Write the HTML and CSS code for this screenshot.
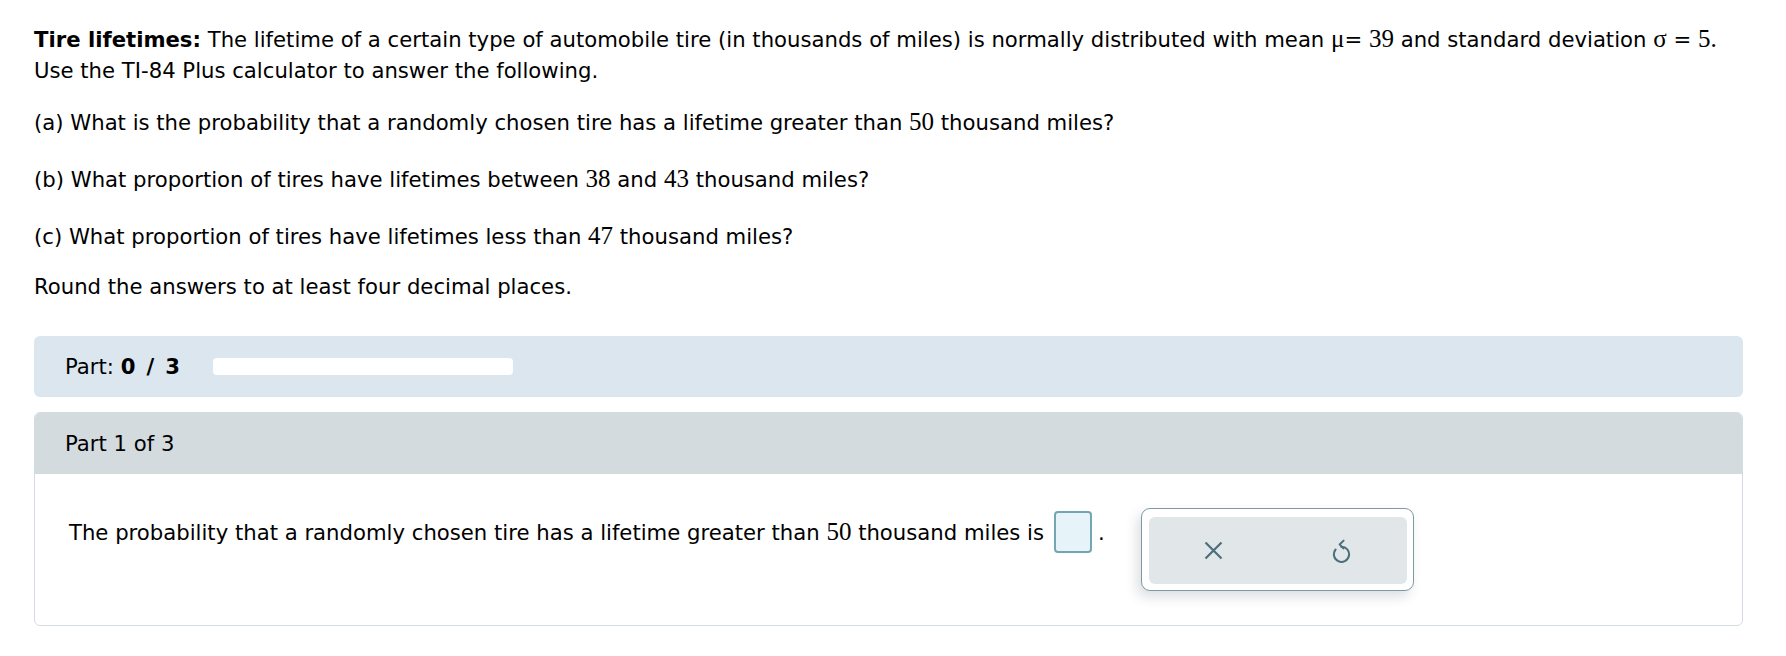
FILE: index.html
```html
<!DOCTYPE html>
<html lang="en">
<head>
<meta charset="utf-8">
<title>Tire lifetimes</title>
<link rel="stylesheet" href="styles.css">
</head>
<body>
<div class="page">
  <div class="problem">
    <p class="intro"><b>Tire lifetimes:</b> The lifetime of a certain type of automobile tire (in thousands of miles) is normally distributed with mean <span class="m">μ</span>= <span class="m">39</span> and standard deviation <span class="m">σ</span> = <span class="m">5.</span><br>Use the TI-84 Plus calculator to answer the following.</p>
    <p class="q first">(a) What is the probability that a randomly chosen tire has a lifetime greater than <span class="m">50</span> thousand miles?</p>
    <p class="q">(b) What proportion of tires have lifetimes between <span class="m">38</span> and <span class="m">43</span> thousand miles?</p>
    <p class="q third">(c) What proportion of tires have lifetimes less than <span class="m">47</span> thousand miles?</p>
    <p class="round">Round the answers to at least four decimal places.</p>
  </div>

  <div class="progress">
    <span class="progress-label">Part: <b>0 / 3</b></span>
    <div class="track"></div>
  </div>

  <div class="card">
    <div class="card-head">Part 1 of 3</div>
    <div class="card-body">
      <div class="answer">
        <span>The probability that a randomly chosen tire has a lifetime greater than <span class="m">50</span> thousand miles is</span>
        <span class="box"></span>
        <span class="dot">.</span>
      </div>
      <div class="tools">
        <div class="tools-inner">
          <div class="tool">
            <svg width="19" height="19" viewBox="0 0 19 19" aria-hidden="true">
              <path d="M1.5 1.5 L17.5 17.5 M17.5 1.5 L1.5 17.5" stroke="#4b6e7a" stroke-width="2.2" fill="none"/>
            </svg>
          </div>
          <div class="tool">
            <svg width="20" height="25" viewBox="0 0 20 25" aria-hidden="true">
              <path d="M3.6 11.5 A7.6 7.6 0 1 0 9.2 8.7" stroke="#4b6e7a" stroke-width="2" fill="none" stroke-linecap="round"/>
              <path d="M11.6 2.6 L7.6 6.4 L11.4 10.4" stroke="#4b6e7a" stroke-width="2" fill="none" stroke-linecap="round" stroke-linejoin="round"/>
            </svg>
          </div>
        </div>
      </div>
    </div>
  </div>
</div>
</body>
</html>
```

FILE: styles.css
```css
html, body {
  margin: 0;
  padding: 0;
  background: #ffffff;
}

body {
  font-family: "DejaVu Sans", Verdana, sans-serif;
  font-size: 21.2px;
  line-height: 27px;
  color: #000000;
}

.page {
  padding: 24px 43px 0 34px;
}

p {
  margin: 0;
}

.intro {
  line-height: 31px;
}

.m {
  font-family: "Liberation Serif", "Times New Roman", serif;
  font-size: 25px;
  line-height: 1;
}

.q {
  margin-top: 29.5px;
}

.q.first {
  margin-top: 23px;
}

.q.third {
  margin-top: 30.5px;
}

.round {
  margin-top: 23px;
}

.progress {
  margin-top: 36px;
  height: 61px;
  background: #dce6ef;
  border-radius: 6px;
  display: flex;
  align-items: center;
  padding-left: 31px;
}

.progress-label b {
  letter-spacing: 1.8px;
}

.track {
  width: 300px;
  height: 17px;
  background: #ffffff;
  border-radius: 4px;
  margin-left: 31px;
}

.card {
  margin-top: 15px;
  border: 1px solid #d3dce2;
  border-radius: 6px;
}

.card-head {
  height: 61px;
  background: #d3dbdf;
  border-radius: 5px 5px 0 0;
  display: flex;
  align-items: center;
  padding-left: 30px;
}

.card-body {
  display: flex;
  align-items: flex-start;
  padding: 34px 0 34px 34px;
}

.answer {
  display: flex;
  align-items: center;
  height: 42px;
  margin-top: 3px;
}

.box {
  display: inline-block;
  box-sizing: border-box;
  width: 38px;
  height: 42px;
  border: 2px solid #74a5b2;
  border-radius: 4px;
  background: #e6f3f8;
  margin: 0 6px 0 10px;
}

.tools {
  margin-left: 36px;
  box-sizing: border-box;
  width: 273px;
  height: 83px;
  padding: 8px 6px 6px 7px;
  border: 1px solid #7f9aa5;
  border-radius: 9px;
  background: #ffffff;
  box-shadow: -4px 6px 12px rgba(60, 80, 90, 0.18);
}

.tools-inner {
  display: flex;
  height: 100%;
  background: #e1e6e9;
  border-radius: 6px;
}

.tool {
  flex: 1;
  display: flex;
  align-items: center;
  justify-content: center;
}

.tool svg {
  display: block;
}
```
